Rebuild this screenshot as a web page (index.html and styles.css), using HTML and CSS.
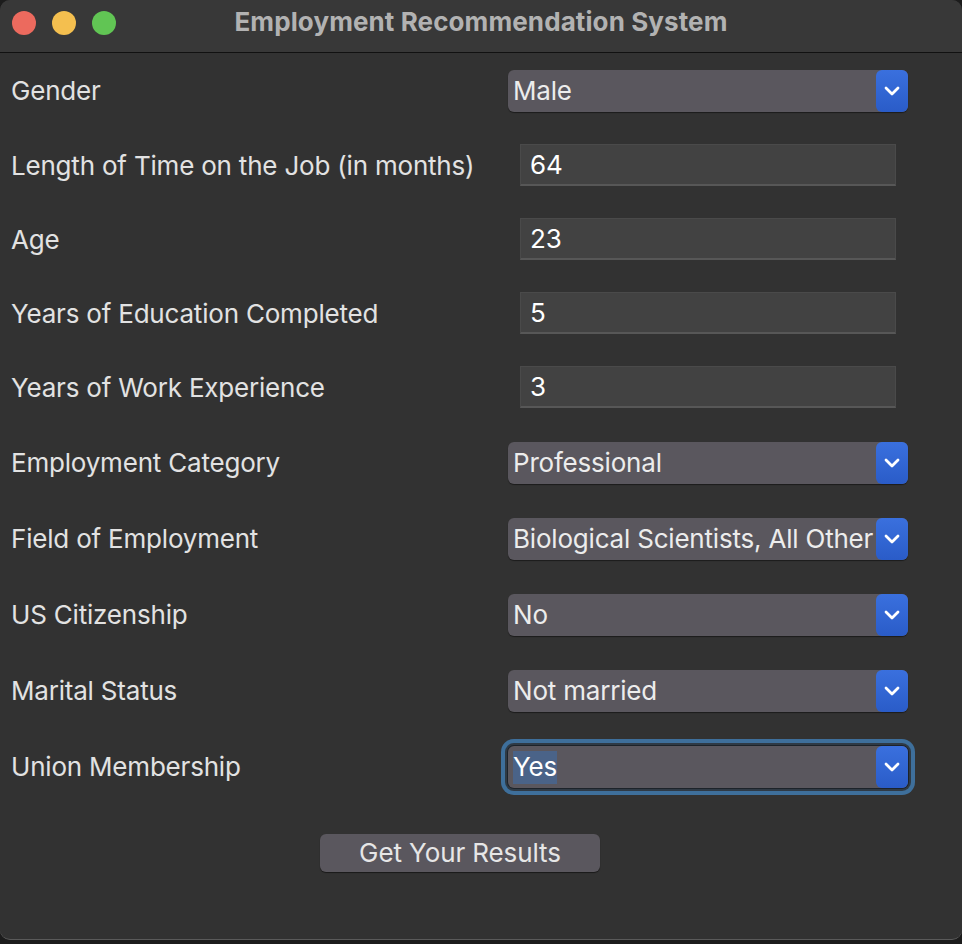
FILE: index.html
```html
<!DOCTYPE html>
<html lang="en">
<head>
<meta charset="utf-8">
<title>Employment Recommendation System</title>
<link rel="stylesheet" href="styles.css">
</head>
<body>
<div class="window">
  <header class="titlebar">
    <div class="lights">
      <span class="light red"></span>
      <span class="light yellow"></span>
      <span class="light green"></span>
    </div>
    <div class="title">Employment Recommendation System</div>
  </header>
  <main class="form">
    <div class="row row-combo">
      <label class="label">Gender</label>
      <div class="combo"><span class="combo-text">Male</span><span class="combo-btn"><svg viewBox="0 0 16 10" width="16" height="10"><polyline points="2,2 8,8 14,2" fill="none" stroke="#fff" stroke-width="2.8" stroke-linecap="round" stroke-linejoin="round"/></svg></span></div>
    </div>
    <div class="row row-entry">
      <label class="label">Length of Time on the Job (in months)</label>
      <div class="entry">64</div>
    </div>
    <div class="row row-entry">
      <label class="label">Age</label>
      <div class="entry">23</div>
    </div>
    <div class="row row-entry">
      <label class="label">Years of Education Completed</label>
      <div class="entry">5</div>
    </div>
    <div class="row row-entry">
      <label class="label">Years of Work Experience</label>
      <div class="entry">3</div>
    </div>
    <div class="row row-combo">
      <label class="label">Employment Category</label>
      <div class="combo"><span class="combo-text">Professional</span><span class="combo-btn"><svg viewBox="0 0 16 10" width="16" height="10"><polyline points="2,2 8,8 14,2" fill="none" stroke="#fff" stroke-width="2.8" stroke-linecap="round" stroke-linejoin="round"/></svg></span></div>
    </div>
    <div class="row row-combo">
      <label class="label">Field of Employment</label>
      <div class="combo"><span class="combo-text">Biological Scientists, All Other</span><span class="combo-btn"><svg viewBox="0 0 16 10" width="16" height="10"><polyline points="2,2 8,8 14,2" fill="none" stroke="#fff" stroke-width="2.8" stroke-linecap="round" stroke-linejoin="round"/></svg></span></div>
    </div>
    <div class="row row-combo">
      <label class="label">US Citizenship</label>
      <div class="combo"><span class="combo-text">No</span><span class="combo-btn"><svg viewBox="0 0 16 10" width="16" height="10"><polyline points="2,2 8,8 14,2" fill="none" stroke="#fff" stroke-width="2.8" stroke-linecap="round" stroke-linejoin="round"/></svg></span></div>
    </div>
    <div class="row row-combo">
      <label class="label">Marital Status</label>
      <div class="combo"><span class="combo-text">Not married</span><span class="combo-btn"><svg viewBox="0 0 16 10" width="16" height="10"><polyline points="2,2 8,8 14,2" fill="none" stroke="#fff" stroke-width="2.8" stroke-linecap="round" stroke-linejoin="round"/></svg></span></div>
    </div>
    <div class="row row-combo">
      <label class="label">Union Membership</label>
      <div class="combo focused"><span class="combo-text"><span class="selected">Yes</span></span><span class="combo-btn"><svg viewBox="0 0 16 10" width="16" height="10"><polyline points="2,2 8,8 14,2" fill="none" stroke="#fff" stroke-width="2.8" stroke-linecap="round" stroke-linejoin="round"/></svg></span></div>
    </div>
    <div class="actions">
      <button class="btn" type="button">Get Your Results</button>
    </div>
  </main>
</div>
<div class="below"></div>
</body>
</html>
```
FILE: styles.css
```css
* { box-sizing: border-box; }
html, body {
  margin: 0;
  padding: 0;
  background: #1c1c1c;
}
body {
  width: 962px;
  height: 944px;
  overflow: hidden;
  font-family: Inter, "Noto Sans", "Liberation Sans", sans-serif;
}
.window {
  width: 962px;
  height: 940px;
  background: #323232;
  border-radius: 10px;
  border-bottom: 1px solid #5a5a5a;
  overflow: hidden;
  display: flex;
  flex-direction: column;
}
.titlebar {
  height: 53px;
  flex: none;
  background: #383838;
  border-bottom: 1px solid #111;
  display: flex;
  align-items: center;
  position: relative;
}
.lights {
  display: flex;
  gap: 16px;
  padding-left: 12px;
  margin-top: -6px;
}
.light {
  width: 24px;
  height: 24px;
  border-radius: 50%;
  display: block;
}
.red { background: #ec6a5e; }
.yellow { background: #f4bf4f; }
.green { background: #61c554; }
.title {
  position: absolute;
  left: 0;
  right: 0;
  top: 6px;
  text-align: center;
  font-weight: 700;
  font-size: 26px;
  line-height: 32px;
  letter-spacing: 0.1px;
  color: #b2b2b2;
}
.form {
  display: flex;
  flex-direction: column;
}
.row {
  display: flex;
  align-items: center;
}
.row-combo { height: 76px; }
.row-entry { height: 74px; }
.label {
  width: 508px;
  padding-left: 11px;
  padding-bottom: 2px;
  font-size: 26px;
  letter-spacing: -0.2px;
  color: #e2e2e2;
}
.combo {
  width: 400px;
  height: 42px;
  background: #5a575e;
  border-radius: 6px;
  display: flex;
  align-items: center;
  box-shadow: 0 1px 1px rgba(0,0,0,0.45);
}
.combo-text {
  flex: 1;
  padding-left: 5px;
  padding-bottom: 2px;
  font-size: 26px;
  letter-spacing: -0.2px;
  color: #ececec;
  white-space: nowrap;
  overflow: hidden;
}
.selected {
  background: #4a6388;
  color: #fff;
  padding: 2px 0;
}
.combo-btn {
  width: 32px;
  height: 42px;
  flex: none;
  border-radius: 6px;
  background: linear-gradient(#3a70de, #2a5cc8);
  display: flex;
  align-items: center;
  justify-content: center;
}
.combo.focused {
  box-shadow: 0 0 0 1px #1d232a, 0 0 0 3px #2f3a45, 0 0 0 7px #3e6f9b;
  border-radius: 6px;
}
.entry {
  width: 376px;
  height: 42px;
  margin-left: 12px;
  margin-bottom: 2px;
  background: #424242;
  border: 1px solid #4a4a4a;
  border-bottom: 2px solid #575757;
  font-size: 26px;
  color: #fff;
  padding-left: 9px;
  padding-bottom: 1px;
  display: flex;
  align-items: center;
}
.actions {
  display: flex;
  padding-top: 29px;
  padding-left: 320px;
}
.btn {
  width: 280px;
  height: 38px;
  background: #5a575e;
  border: none;
  border-radius: 6px;
  color: #e6e6e6;
  font-family: inherit;
  font-size: 26px;
  letter-spacing: -0.1px;
  box-shadow: 0 1px 1px rgba(0,0,0,0.5);
  padding: 0 0 2px;
}
.below {
  height: 4px;
  background: #1c1c1c;
}
```
